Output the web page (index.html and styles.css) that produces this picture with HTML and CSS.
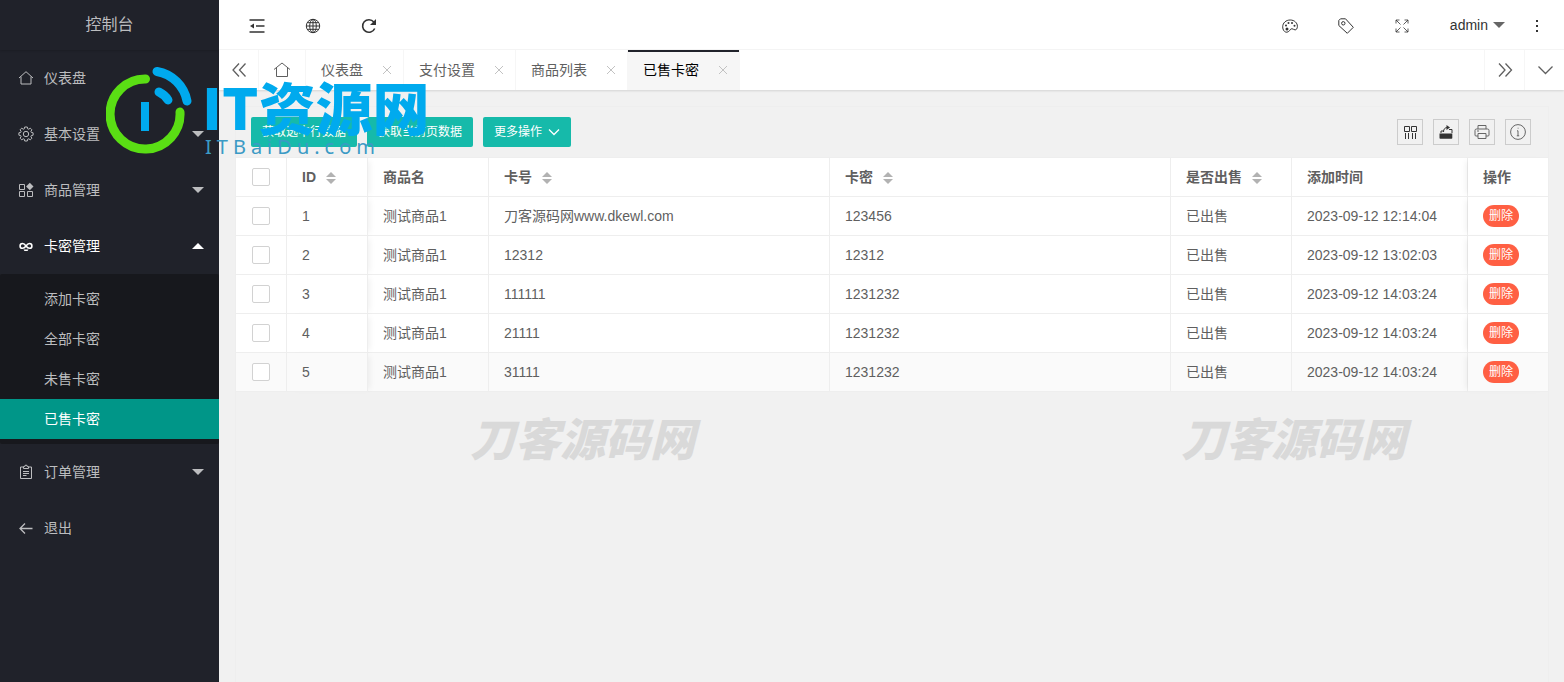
FILE: index.html
```html
<!DOCTYPE html>
<html lang="zh-CN">
<head>
<meta charset="utf-8">
<title>控制台</title>
<link rel="stylesheet" href="styles.css">
</head>
<body>
<div class="app">
  <aside class="side">
    <div class="side-title">控制台</div>
    <nav class="menu">
      <a class="menu-item" href="#"><svg class="icon" viewBox="0 0 16 16"><path d="M1 8 8 1.700 15 8M3 6.600V14h10V6.600"/></svg><span>仪表盘</span></a>
      <a class="menu-item" href="#"><svg class="icon" viewBox="0 0 16 16"><path d="M6.700 1h2.600l.4 1.800 1 .4 1.600-1 1.600 1.600-1 1.600.4 1 1.800.4v2.400l-1.800.4-.4 1 1 1.600-1.600 1.600-1.600-1-1 .4-.4 1.800H6.700l-.4-1.800-1-.4-1.600 1-1.600-1.600 1-1.600-.4-1L.9 9.200V6.800l1.800-.4.4-1-1-1.600 1.600-1.600 1.600 1 1-.4z"/><circle cx="8" cy="8" r="2.700"/></svg><span>基本设置</span><i class="caret"></i></a>
      <a class="menu-item" href="#"><svg class="icon" viewBox="0 0 16 16"><path d="M1.500 2.500h5v5h-5zM1.500 9.500h5v5h-5zM9.500 9.500h5v5h-5z"/><path class="solid" d="m11.800.8 3.700 3.700-3.700 3.700-3.700-3.700z"/></svg><span>商品管理</span><i class="caret"></i></a>
      <a class="menu-item open" href="#"><svg class="icon bold" viewBox="0 0 16 16"><path d="M8 8C6.700 6 5.700 5.500 4.500 5.500a2.300 2.300 0 0 0 0 4.800C5.700 10.300 6.700 9.800 8 8s2.300-2.500 3.500-2.500a2.300 2.300 0 0 1 0 4.800C10.300 10.300 9.300 9.800 8 8"/><path class="solid" d="M5.500 11.500h5L9.500 13h-3z"/></svg><span>卡密管理</span><i class="caret up"></i></a>
      <div class="submenu">
        <a href="#">添加卡密</a>
        <a href="#">全部卡密</a>
        <a href="#">未售卡密</a>
        <a class="current" href="#">已售卡密</a>
      </div>
      <a class="menu-item" href="#"><svg class="icon" viewBox="0 0 16 16"><path d="M5 3H2.500v11.500h11V3H11M5.500 4.500v-2h1.300l.2-1.200h2l.2 1.200h1.300v2zM5 7.500h6M5 9.500h6M5 11.500h3.500"/></svg><span>订单管理</span><i class="caret"></i></a>
      <a class="menu-item" href="#"><svg class="icon" viewBox="0 0 16 16"><path stroke-width="1.300" d="M14.500 8.500H2M7 3.500 2 8.500l5 5"/></svg><span>退出</span></a>
    </nav>
  </aside>

  <div class="main">
    <header class="topbar">
      <button class="tool" aria-label="收起菜单"><svg class="icon bold" viewBox="0 0 16 16"><path d="M.5 2h15M7 8h8.500M.5 14h15"/><path class="solid" d="M1 8l4-2.500v5z"/></svg></button>
      <button class="tool" aria-label="网站"><svg class="icon" viewBox="0 0 16 16"><circle cx="8" cy="8" r="6.700"/><ellipse cx="8" cy="8" rx="3.300" ry="6.700"/><path d="M8 1.300v13.400M1.300 8h13.400M2.300 4.700h11.400M2.300 11.300h11.400"/></svg></button>
      <button class="tool" aria-label="刷新"><svg class="icon bold" viewBox="0 0 16 16"><path d="M13.700 10.500A6.300 6.300 0 1 1 12.800 4"/><path class="solid" d="M15 1v6H9z"/></svg></button>
      <span class="spacer"></span>
      <button class="tool" aria-label="主题"><svg class="icon" viewBox="0 0 16 16"><path d="M5 14.200C2.600 14.500.7 12 .7 8.800.7 4.900 4 2 8.200 2c4.300 0 7.200 3 7.200 6.300 0 2.200-1 3.600-2.300 3.600-1.500 0-1.900-1.200-3.200-1.200-2 0-2 3.100-4.900 3.500z"/><circle class="solid" cx="5" cy="11" r="1.500"/><circle class="solid" cx="4" cy="7.500" r="1"/><circle class="solid" cx="6.500" cy="5" r="1"/><circle class="solid" cx="10" cy="5" r="1"/><circle class="solid" cx="12.500" cy="7.800" r="1"/></svg></button>
      <button class="tool" aria-label="便签"><svg class="icon" viewBox="0 0 16 16"><path d="M.8 2.500 2.500.8h5l7.800 8.500-6 6L.8 7.500z"/><circle cx="5.300" cy="5.300" r="1.700"/></svg></button>
      <button class="tool" aria-label="全屏"><svg class="icon thin" viewBox="0 0 16 16"><path d="M2 5.500V2h3.500M2 2l4.500 4.500M10.500 2H14v3.500M14 2 9.500 6.500M2 10.500V14h3.500M2 14l4.500-4.500M10.500 14H14v-3.500M14 14 9.500 9.500"/></svg></button>
      <button class="user">admin<i class="caret"></i></button>
      <button class="more" aria-label="更多"><svg class="icon" viewBox="0 0 16 16"><path class="solid" d="M7 2h2v2H7zM7 7h2v2H7zM7 12h2v2H7z"/></svg></button>
    </header>

    <div class="tabs">
      <button class="tab-ctl left" aria-label="向左"><svg class="icon" viewBox="0 0 16 16"><path d="M8 1.500 2 8l6 6.500M14.500 1.500l-6 6.500 6 6.500"/></svg></button>
      <a class="tab home" href="#" aria-label="主页"><svg class="icon large" viewBox="0 0 18 18"><path d="M1 8.500 9 2l8 6.500M3.500 6.500v9h11v-9"/></svg></a>
      <a class="tab" href="#">仪表盘<svg class="close" viewBox="0 0 10 10"><path d="m1 1 8 8M9 1 1 9"/></svg></a>
      <a class="tab" href="#">支付设置<svg class="close" viewBox="0 0 10 10"><path d="m1 1 8 8M9 1 1 9"/></svg></a>
      <a class="tab" href="#">商品列表<svg class="close" viewBox="0 0 10 10"><path d="m1 1 8 8M9 1 1 9"/></svg></a>
      <a class="tab active" href="#">已售卡密<svg class="close" viewBox="0 0 10 10"><path d="m1 1 8 8M9 1 1 9"/></svg></a>
      <span class="spacer"></span>
      <button class="tab-ctl" aria-label="向右"><svg class="icon" viewBox="0 0 16 16"><path d="m2 1.500 6 6.500-6 6.500M8.500 1.500l6 6.500-6 6.500"/></svg></button>
      <button class="tab-ctl" aria-label="标签菜单"><svg class="icon" viewBox="0 0 16 16"><path d="m1.500 4.500 7 7 7-7"/></svg></button>
    </div>

    <main class="content">
      <section class="card">
        <div class="toolbar">
          <button class="btn">获取选中行数据</button>
          <button class="btn">获取当前页数据</button>
          <button class="btn">更多操作<svg class="chev" viewBox="0 0 12 12"><path d="m1 3.500 5 5 5-5"/></svg></button>
          <span class="spacer"></span>
          <button class="box" aria-label="筛选列"><svg class="icon" viewBox="0 0 16 16"><path d="M2.500 2.500h5v5h-5zM9.500 2.500h5v5h-5zM3.500 9v6M6.500 9v6M10.500 9v6M13.500 9v6"/></svg></button>
          <button class="box" aria-label="导出"><svg class="icon" viewBox="0 0 16 16"><path class="solid" d="M1.500 9.500h12.800V14q0 .8-.8.8H2.300q-.8 0-.8-.8z"/><path d="M3 9V7h3M11 5.500h3V9M5.500 8c0-3 1.500-4.500 4-4.500"/><path class="solid" d="M8.500 1 12 3.500 8.500 6z"/></svg></button>
          <button class="box soft" aria-label="打印"><svg class="icon" viewBox="0 0 16 16"><path d="M4 5V1.500h8V5M4 12H2q-1 0-1-1V6.500Q1 5 2.500 5h11Q15 5 15 6.500V11q0 1-1 1h-2M4 9.500h8v5H4zM3 7h2"/></svg></button>
          <button class="box soft" aria-label="提示"><svg class="icon" viewBox="0 0 16 16"><circle cx="8" cy="8" r="7.400"/><path d="M8 6.800v5M7 6.800h1M6.800 11.800h2.400M7.700 4.200h.8"/></svg></button>
        </div>
        <table class="grid">
          <colgroup><col class="w51"><col class="w81"><col class="w121"><col><col><col class="w121"><col class="w176"><col class="w80"></colgroup>
          <thead>
            <tr><th class="check"><input type="checkbox" aria-label="全选"></th><th class="edge">ID<i class="sort"></i></th><th>商品名</th><th>卡号<i class="sort"></i></th><th>卡密<i class="sort"></i></th><th>是否出售<i class="sort"></i></th><th>添加时间</th><th class="pinned">操作</th></tr>
          </thead>
          <tbody>
            <tr><td class="check"><input type="checkbox" aria-label="选择 1"></td><td class="edge">1</td><td>测试商品1</td><td>刀客源码网www.dkewl.com</td><td>123456</td><td>已出售</td><td>2023-09-12 12:14:04</td><td class="pinned"><button class="del">删除</button></td></tr>
            <tr><td class="check"><input type="checkbox" aria-label="选择 2"></td><td class="edge">2</td><td>测试商品1</td><td>12312</td><td>12312</td><td>已出售</td><td>2023-09-12 13:02:03</td><td class="pinned"><button class="del">删除</button></td></tr>
            <tr><td class="check"><input type="checkbox" aria-label="选择 3"></td><td class="edge">3</td><td>测试商品1</td><td>111111</td><td>1231232</td><td>已出售</td><td>2023-09-12 14:03:24</td><td class="pinned"><button class="del">删除</button></td></tr>
            <tr><td class="check"><input type="checkbox" aria-label="选择 4"></td><td class="edge">4</td><td>测试商品1</td><td>21111</td><td>1231232</td><td>已出售</td><td>2023-09-12 14:03:24</td><td class="pinned"><button class="del">删除</button></td></tr>
            <tr class="hover"><td class="check"><input type="checkbox" aria-label="选择 5"></td><td class="edge">5</td><td>测试商品1</td><td>31111</td><td>1231232</td><td>已出售</td><td>2023-09-12 14:03:24</td><td class="pinned"><button class="del">删除</button></td></tr>
          </tbody>
        </table>
      </section>
    </main>
  </div>

  <div class="brand">
    <svg class="brand-mark" viewBox="0 0 88 88"><g fill="none" stroke-width="9" stroke-linecap="round"><path stroke="#5ade14" d="M39.500 13A35 35 0 1 0 74 46"/><path stroke="#00aaee" d="M51 5.500A37 37 0 0 1 81 35M53 26q6 3 9 8"/></g><path fill="#00aaee" d="M35 36h8v29h-8z"/></svg>
    <div class="brand-text"><strong>IT资源网</strong><span>ITBaiDu.com</span></div>
  </div>
  <span class="stamp one">刀客源码网</span>
  <span class="stamp two">刀客源码网</span>
</div>
</body>
</html>
```

FILE: styles.css
```css
* { box-sizing: border-box; }
body {
  margin: 0;
  background: #f1f1f1;
  color: #5f5f5f;
  font: 14px/20px "Liberation Sans", "Noto Sans CJK SC", sans-serif;
}
a { color: inherit; text-decoration: none; }
button { padding: 0; border: 0; background: none; color: inherit; font: inherit; }
.app { position: relative; display: flex; min-height: 100vh; overflow: hidden; }
.spacer { flex: 1; }

.icon { width: 16px; height: 16px; flex: none; fill: none; stroke: currentColor; stroke-width: 1; }
.icon.bold { stroke-width: 1.6; }
.icon.thin { stroke-width: .8; }
.icon.large { width: 18px; height: 18px; }
.icon .solid { fill: currentColor; stroke: none; }
.caret { border: 6px solid transparent; border-top-color: currentColor; border-bottom-width: 0; }
.caret.up { border-top-width: 0; border-bottom: 6px solid currentColor; }

/* Sidebar */
.side { width: 219px; flex: none; background: #20222a; color: #bcbdbf; }
.side-title { height: 50px; line-height: 50px; font-size: 16px; text-align: center; box-shadow: 0 1px 2px rgba(0, 0, 0, .15); }
.menu-item { display: flex; align-items: center; gap: 10px; height: 56px; padding: 0 15px 0 18px; }
.menu-item .caret { margin-left: auto; }
.menu-item.open { color: #fff; }
.submenu { padding: 5px 0; background: #17181d; border-radius: 2px; }
.submenu a { display: block; height: 40px; padding-left: 44px; line-height: 40px; }
.submenu .current { background: #009688; color: #fff; }

/* Header */
.main { flex: 1; min-width: 0; display: flex; flex-direction: column; }
.topbar { display: flex; align-items: center; height: 50px; padding: 0 14px 0 10px; background: #fff; border-bottom: 1px solid #f6f6f6; color: #333; }
.tool { display: grid; place-items: center; width: 56px; height: 50px; padding-top: 2px; }
.user { display: flex; align-items: center; gap: 5px; height: 50px; padding: 0 18px 0 20px; }
.user .caret { color: #666; }
.more { display: grid; place-items: center; width: 27px; height: 50px; padding-top: 2px; }

.tabs { display: flex; height: 40px; background: #fff; box-shadow: 0 1px 2px rgba(0, 0, 0, .12); position: relative; }
.tab { display: flex; align-items: center; gap: 19px; height: 40px; padding: 0 11px 0 15px; border-right: 1px solid #f6f6f6; }
.tab.home { padding: 0 14px; }
.tab .close { width: 10px; height: 10px; fill: none; stroke: #c2c2c2; }
.tab.active { background: #f6f6f6; color: #000; box-shadow: inset 0 2px #20222a; }
.tab-ctl { display: grid; place-items: center; width: 40px; border-left: 1px solid #f6f6f6; }
.tab-ctl .icon { stroke-width: 1.3; }
.tab-ctl.left { border-left: 0; border-right: 1px solid #f6f6f6; }

/* Content */
.content { flex: 1; display: flex; padding: 16px 15px 0 16px; }
.card { flex: 1; min-width: 0; border: 1px solid #eee; border-bottom: 0; }
.toolbar { display: flex; align-items: center; gap: 10px; height: 51px; padding: 0 17px 0 15px; border-bottom: 1px solid #eee; }
.btn { display: flex; align-items: center; height: 30px; padding: 0 11px; border-radius: 2px; background: #16baaa; color: #fff; font-size: 12px; }
.chev { width: 12px; height: 12px; margin-left: 6px; fill: none; stroke: #fff; stroke-width: 1.3; }
.box { display: grid; place-items: center; width: 26px; height: 26px; border: 1px solid #ccc; color: #333; }
.box.soft { color: #666; }

.grid { width: 100%; table-layout: fixed; border-spacing: 0; background: #fff; }
.w51 { width: 51px; }
.w80 { width: 80px; }
.w81 { width: 81px; }
.w121 { width: 121px; }
.w176 { width: 176px; }
.grid th, .grid td { height: 39px; padding: 0 15px; border-right: 1px solid #eee; border-bottom: 1px solid #eee; background: #fff; text-align: left; white-space: nowrap; }
.grid th { font-weight: 600; }
.grid .hover td { background: #fafafa; }
.grid .check { padding: 0 16px; }
.grid .edge { position: relative; box-shadow: 5px 0 6px -3px rgba(0, 0, 0, .06); }
.grid .pinned { position: relative; border-right: 0; box-shadow: -5px 0 6px -3px rgba(0, 0, 0, .06); }
.grid input { display: block; appearance: none; width: 18px; height: 18px; margin: 0; border: 1px solid #d2d2d2; border-radius: 2px; background: #fff; }
.sort { display: inline-grid; gap: 2px; margin-left: 10px; vertical-align: middle; }
.sort::before, .sort::after { content: ""; border: 5px solid transparent; }
.sort::before { border-top-width: 0; border-bottom-color: #b2b2b2; }
.sort::after { border-bottom-width: 0; border-top-color: #b2b2b2; }
.del { display: block; height: 22px; padding: 0 6px; border-radius: 11px; background: #ff5f43; color: #fff; font-size: 12px; line-height: 22px; }

/* Overlaid marks */
.brand { position: absolute; left: 106px; top: 66px; display: flex; pointer-events: none; }
.brand-mark { width: 88px; height: 88px; }
.brand-text { display: flex; flex-direction: column; padding: 16px 0 0 8px; color: #00aaee; }
.brand-text strong { font: 900 57px/46px "Noto Sans CJK SC", sans-serif; white-space: nowrap; }
.brand-text span { padding-left: 3px; color: #3b9ac5; font: 20px/38px "Noto Sans", sans-serif; letter-spacing: 5px; }
.stamp { position: absolute; top: 405px; color: #d9d9d9; font: italic 900 45px/64px "Noto Sans CJK SC", sans-serif; white-space: nowrap; pointer-events: none; }
.stamp.one { left: 470px; }
.stamp.two { left: 1181px; }
```
